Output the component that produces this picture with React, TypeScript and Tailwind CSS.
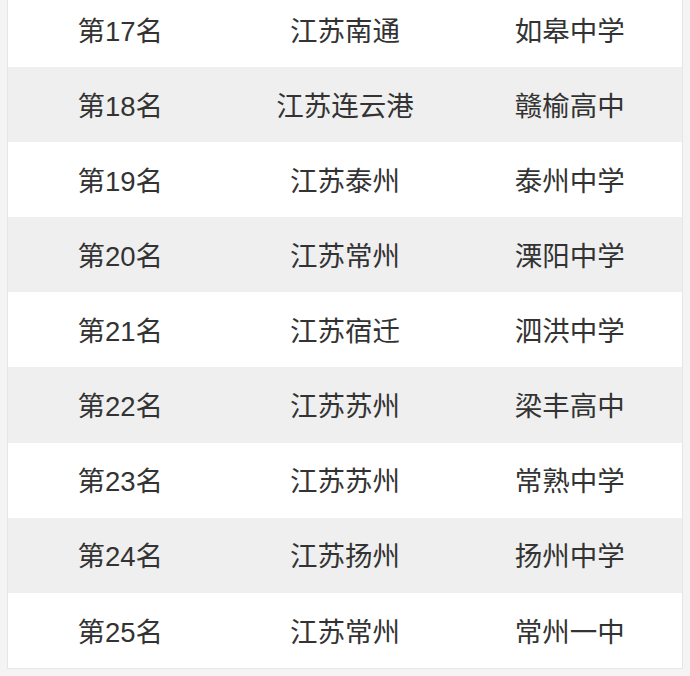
import React from "react";

const rows: [string, string, string][] = [
  ["第17名", "江苏南通", "如皋中学"],
  ["第18名", "江苏连云港", "赣榆高中"],
  ["第19名", "江苏泰州", "泰州中学"],
  ["第20名", "江苏常州", "溧阳中学"],
  ["第21名", "江苏宿迁", "泗洪中学"],
  ["第22名", "江苏苏州", "梁丰高中"],
  ["第23名", "江苏苏州", "常熟中学"],
  ["第24名", "江苏扬州", "扬州中学"],
  ["第25名", "江苏常州", "常州一中"],
];

export default function App() {
  return (
    <div
      className="w-[690px] h-[676px] overflow-hidden bg-[#f4f4f4] px-[7px]"
      style={{ fontFamily: '"Liberation Sans", "Noto Sans CJK SC", sans-serif' }}
    >
      <div className="-mt-[8px] border-x border-[#e6e6e6] border-b">
        {rows.map((r, i) => (
          <div
            key={i}
            className={`grid grid-cols-3 h-[75.1px] items-center pt-[4px] text-[27.5px] text-[#333333] ${
              i % 2 === 0 ? "bg-white" : "bg-[#efefef]"
            }`}
          >
            {r.map((c, j) => (
              <div key={j} className="text-center leading-none">
                {c}
              </div>
            ))}
          </div>
        ))}
      </div>
    </div>
  );
}
